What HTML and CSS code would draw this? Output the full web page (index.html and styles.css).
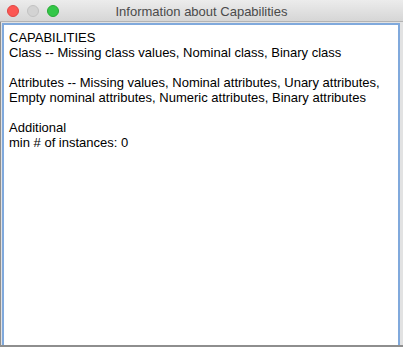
FILE: index.html
```html
<!DOCTYPE html>
<html>
<head>
<meta charset="utf-8">
<link rel="stylesheet" href="styles.css">
</head>
<body>
<div class="window">
  <div class="titlebar">
    <div class="lights">
      <span class="light red"></span>
      <span class="light gray"></span>
      <span class="light green"></span>
    </div>
    <div class="title">Information about Capabilities</div>
  </div>
  <div class="frame">
    <div class="pane">
      <div class="line">CAPABILITIES</div>
      <div class="line">Class -- Missing class values, Nominal class, Binary class</div>
      <div class="line">&nbsp;</div>
      <div class="line">Attributes -- Missing values, Nominal attributes, Unary attributes,</div>
      <div class="line">Empty nominal attributes, Numeric attributes, Binary attributes</div>
      <div class="line">&nbsp;</div>
      <div class="line">Additional</div>
      <div class="line">min # of instances: 0</div>
    </div>
  </div>
</div>
</body>
</html>
```

FILE: styles.css
```css
html, body {
  margin: 0;
  padding: 0;
  background: #dcdcdc;
}
.window {
  width: 403px;
  height: 347px;
  display: flex;
  flex-direction: column;
  overflow: hidden;
}
.titlebar {
  height: 21px;
  flex: none;
  position: relative;
  background: linear-gradient(#ececec, #d6d6d6);
  border-bottom: 1px solid #b3b3b3;
  display: flex;
  align-items: center;
  justify-content: center;
}
.lights {
  position: absolute;
  left: 7px;
  top: 5px;
  display: flex;
  gap: 8px;
}
.light {
  width: 12px;
  height: 12px;
  border-radius: 50%;
  box-sizing: border-box;
}
.red { background: #fc5753; border: 1px solid #df4744; }
.gray { background: #d3d3d3; border: 1px solid #c2c2c2; }
.green { background: #33c748; border: 1px solid #27aa35; }
.title {
  font-family: "Liberation Sans", Arial, sans-serif;
  font-size: 13px;
  color: #4a4a4a;
  padding-top: 1px;
}
.frame {
  flex: 1;
  display: flex;
  background: #e2e2e2;
  border-left: 1px solid #8e8e8e;
  border-bottom: 2px solid #8e8e8e;
  padding: 1px 3px 0 1px;
}
.pane {
  flex: 1;
  background: #fff;
  border: 2px solid #80a9dc;
  border-bottom: none;
  padding: 5px 5px;
  font-family: "Liberation Sans", Arial, sans-serif;
  font-size: 13px;
  line-height: 15px;
  color: #000;
}
.line {
  white-space: nowrap;
}
```
